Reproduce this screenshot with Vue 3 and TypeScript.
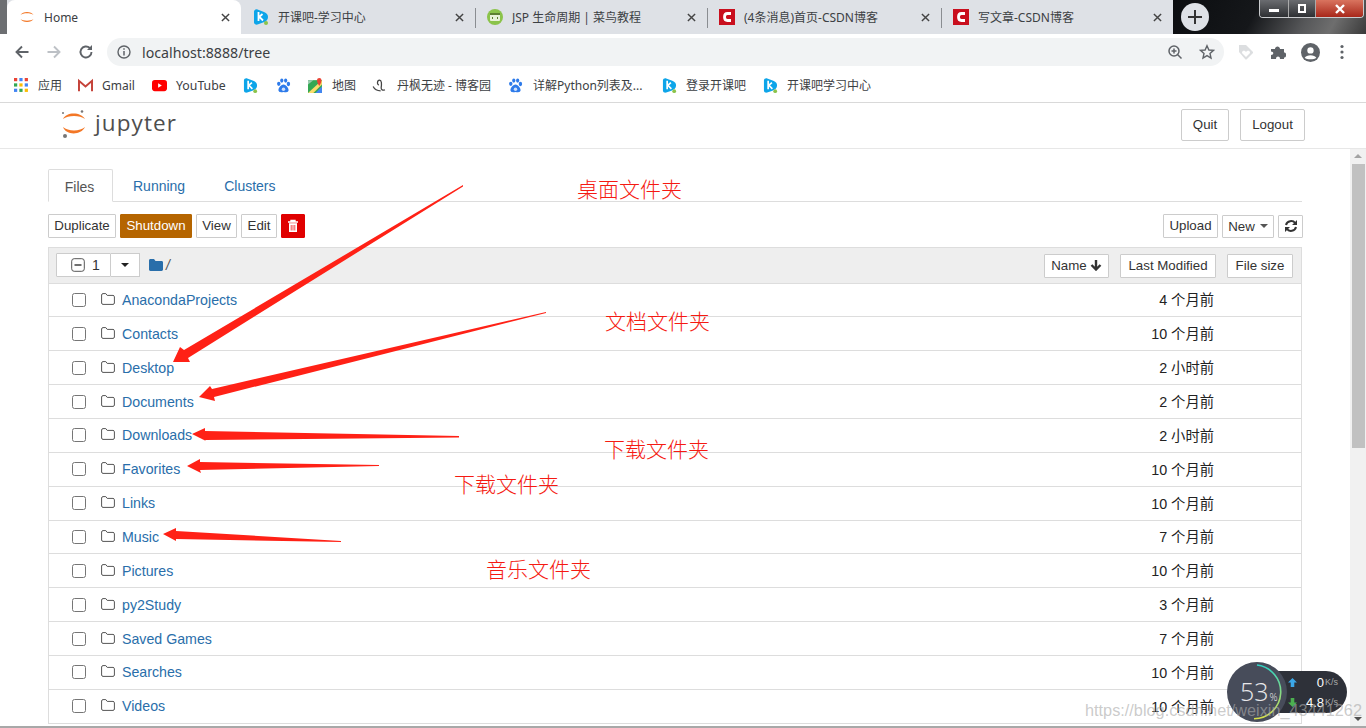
<script setup lang="ts">
type Tab = { title: string; icon: string };
const tabs: Tab[] = [
  { title: "Home", icon: "jup" },
  { title: "开课吧-学习中心", icon: "k" },
  { title: "JSP 生命周期 | 菜鸟教程", icon: "run" },
  { title: "(4条消息)首页-CSDN博客", icon: "c" },
  { title: "写文章-CSDN博客", icon: "c" },
];
const rows: [string, string][] = [
  ["AnacondaProjects", "4 个月前"],
  ["Contacts", "10 个月前"],
  ["Desktop", "2 小时前"],
  ["Documents", "2 个月前"],
  ["Downloads", "2 小时前"],
  ["Favorites", "10 个月前"],
  ["Links", "10 个月前"],
  ["Music", "7 个月前"],
  ["Pictures", "10 个月前"],
  ["py2Study", "3 个月前"],
  ["Saved Games", "7 个月前"],
  ["Searches", "10 个月前"],
  ["Videos", "10 个月前"],
];
const arrows: string[] = [
  "463,185 463,186.5 188,358 190,362 173,362 180,347 184,350",
  "546,312 546,313 214,397 215,401 199,397 210,386 212,389",
  "459,436 459,437.5 205,440 206,441 192,434 205,428 205,431",
  "379,465 379,466 200,470 201,473 187,466 200,459 200,462",
  "341,541 341,542 176,539 176,541 163,534 176,528 176,531",
];
const notes = [
  { text: "桌面文件夹", x: 577, y: 175 },
  { text: "文档文件夹", x: 605, y: 307 },
  { text: "下载文件夹", x: 604, y: 435 },
  { text: "下载文件夹", x: 454, y: 470 },
  { text: "音乐文件夹", x: 486, y: 555 },
];
</script>

<template>
  <div class="page">
    <div class="strip">
      <div class="edge"></div>
      <div v-for="(t, i) in tabs" :key="i" class="tab" :class="{ active: i === 0, divided: i > 1 }">
        <svg v-if="t.icon === 'jup'" class="fav" viewBox="0 0 16 16">
          <path d="M1.5 6C3.5 2 12.5 2 14.5 6C12 3.8 4 3.8 1.5 6Z" fill="#f37726" />
          <path d="M1.5 10C3.5 14 12.5 14 14.5 10C12 12.2 4 12.2 1.5 10Z" fill="#f37726" />
        </svg>
        <svg v-else-if="t.icon === 'k'" class="fav" viewBox="0 0 16 16">
          <path d="M1 2.5C1 .8 3 0 4.5 .5L11 3C14 4.2 15 6 15 8C15 11 13 12.5 10 13.5L4.5 15.5C3 16 1 15 1 13.5Z" fill="#0ea5e9" />
          <path d="M5.5 3V12M5.5 8.5L9.5 5M6.5 8L10 11.5" stroke="#fff" stroke-width="1.8" fill="none" />
          <circle cx="13" cy="14" r="2" fill="#8bc34a" />
        </svg>
        <svg v-else-if="t.icon === 'run'" class="fav" viewBox="0 0 16 16">
          <circle cx="8" cy="8" r="8" fill="#8bc34a" />
          <rect x="3" y="4" width="10" height="8" rx="1" fill="#e8f1d8" />
          <rect x="3" y="4" width="10" height="2" fill="#5d7f32" />
          <path d="M6 8L5 9L6 10M10 8L11 9L10 10" stroke="#5d7f32" fill="none" />
        </svg>
        <svg v-else class="fav" viewBox="0 0 16 16">
          <rect width="16" height="16" fill="#c90f1e" />
          <path d="M12 4.5H8.5C4.5 4.5 4.5 11.5 8.5 11.5H12" stroke="#fff" stroke-width="2.8" fill="none" />
        </svg>
        <span class="tab-title">{{ t.title }}</span>
        <svg class="close" viewBox="0 0 10 10"><path d="M1 1L9 9M9 1L1 9" stroke="#444" stroke-width="1.6" /></svg>
      </div>
      <div class="glass">
        <div class="plus">
          <svg viewBox="0 0 14 14" width="14" height="14"><path d="M7 0V14M0 7H14" stroke="#333" stroke-width="2" /></svg>
        </div>
        <div class="winctl">
          <span class="wbtn w1"><i class="wmin"></i></span>
          <span class="wbtn w2"><i class="wmax"></i></span>
          <span class="wbtn wclose">
            <svg viewBox="0 0 12 10" width="12" height="10"><path d="M2 1L10 9M10 1L2 9" stroke="#fff" stroke-width="2.4" /></svg>
          </span>
        </div>
      </div>
    </div>

    <div class="toolbar">
      <svg class="tool" viewBox="0 0 16 16"><path d="M14.5 8H2.5M8 2.5L2.5 8L8 13.5" stroke="#5f6368" stroke-width="1.9" fill="none" /></svg>
      <svg class="tool" viewBox="0 0 16 16"><path d="M1.5 8H13.5M8 2.5L13.5 8L8 13.5" stroke="#bdc1c6" stroke-width="1.9" fill="none" /></svg>
      <svg class="tool" viewBox="0 0 16 16"><path d="M13.5 8A5.5 5.5 0 1 1 11.8 4" stroke="#5f6368" stroke-width="1.9" fill="none" /><path d="M14 1V6H9Z" fill="#5f6368" /></svg>
      <div class="omni">
        <svg class="info" viewBox="0 0 14 14"><circle cx="7" cy="7" r="6" stroke="#5f6368" stroke-width="1.4" fill="none" /><path d="M7 6V10.5M7 3.2V4.8" stroke="#5f6368" stroke-width="1.5" /></svg>
        <span class="url">localhost:8888/tree</span>
        <span class="spacer"></span>
        <svg class="omni-i" viewBox="0 0 16 16"><circle cx="7" cy="7" r="5" stroke="#5f6368" stroke-width="1.5" fill="none" /><path d="M10.5 10.5L14.5 14.5M7 4.5V9.5M4.5 7H9.5" stroke="#5f6368" stroke-width="1.5" /></svg>
        <svg class="omni-i" viewBox="0 0 16 16"><path d="M8 1.8L9.9 6L14.5 6.4L11 9.4L12 14L8 11.6L4 14L5 9.4L1.5 6.4L6.1 6Z" stroke="#5f6368" stroke-width="1.4" fill="none" /></svg>
      </div>
      <svg class="ext" viewBox="0 0 16 16"><path d="M1 1H8L15 8V9L8.5 15.5H7.5L1 8Z" fill="#dcdee0" /><path d="M4 9L8 13L12 9C12 6 9 6.5 8 8C7 6.5 4 6 4 9Z" fill="#fff" /></svg>
      <svg class="ext" viewBox="0 0 16 16"><path d="M1 5H5C5 1.5 10 1.5 10 5H14V8.5C17 8.5 17 13.5 14 13.5V15H10C10 11.8 6 11.8 6 15H1V11C4 11 4 7.5 1 7.5Z" fill="#5f6368" /></svg>
      <svg class="ext avatar" viewBox="0 0 18 18"><circle cx="9" cy="9" r="9" fill="#5f6368" /><circle cx="9" cy="7" r="3" fill="#fff" /><path d="M3.5 14C5 10.8 13 10.8 14.5 14C12.5 16 5.5 16 3.5 14Z" fill="#fff" /></svg>
      <svg class="ext dots" viewBox="0 0 4 16"><circle cx="2" cy="2.5" r="1.6" fill="#5f6368" /><circle cx="2" cy="8" r="1.6" fill="#5f6368" /><circle cx="2" cy="13.5" r="1.6" fill="#5f6368" /></svg>
    </div>

    <div class="bookmarks">
      <span class="bm bm-apps">
        <svg class="bi" viewBox="0 0 14 14">
          <rect x="0" y="0" width="3" height="3" fill="#ea4335" /><rect x="5" y="0" width="3" height="3" fill="#4285f4" /><rect x="10" y="0" width="3" height="3" fill="#ea4335" />
          <rect x="0" y="5" width="3" height="3" fill="#34a853" /><rect x="5" y="5" width="3" height="3" fill="#fbbc05" /><rect x="10" y="5" width="3" height="3" fill="#4285f4" />
          <rect x="0" y="10" width="3" height="3" fill="#4285f4" /><rect x="5" y="10" width="3" height="3" fill="#34a853" /><rect x="10" y="10" width="3" height="3" fill="#fbbc05" />
        </svg>应用
      </span>
      <span class="bm bm-gmail">
        <svg class="bi" viewBox="0 0 16 14"><path d="M1 13V2L8 8L15 2V13" stroke="#c5433a" stroke-width="2.2" fill="none" /></svg>Gmail
      </span>
      <span class="bm bm-yt">
        <svg class="bi" viewBox="0 0 16 14"><rect y="1" width="16" height="12" rx="3" fill="#f00" /><path d="M6.5 4.5V9.5L10.5 7Z" fill="#fff" /></svg><span class="yt">YouTube</span>
      </span>
      <span class="bm bm-k">
        <svg class="bi" viewBox="0 0 16 16"><path d="M1 2.5C1 .8 3 0 4.5 .5L11 3C14 4.2 15 6 15 8C15 11 13 12.5 10 13.5L4.5 15.5C3 16 1 15 1 13.5Z" fill="#0ea5e9" /><path d="M5.5 3V12M5.5 8.5L9.5 5M6.5 8L10 11.5" stroke="#fff" stroke-width="1.8" fill="none" /><circle cx="13" cy="14" r="2" fill="#8bc34a" /></svg>
      </span>
      <span class="bm bm-paw">
        <svg class="bi" viewBox="0 0 14 14"><g fill="#2e7bea"><ellipse cx="2.6" cy="5.4" rx="1.6" ry="2" /><ellipse cx="5.4" cy="2.4" rx="1.5" ry="2" /><ellipse cx="9" cy="2.4" rx="1.5" ry="2" /><ellipse cx="11.6" cy="5.6" rx="1.6" ry="2" /><path d="M7 6C4.5 6 1.5 10 2.5 12.2C3.5 14 6 13 7 13C8.5 13 10.5 14 11.6 12.2C12.5 10 9.5 6 7 6Z" /></g><circle cx="7" cy="10.5" r="1.6" fill="#cfe0fb" /></svg>
      </span>
      <span class="bm bm-map">
        <svg class="bi" viewBox="0 0 14 14"><rect y="2" width="13" height="12" fill="#34a853" /><path d="M0 14L13 2V6L5 14Z" fill="#fbdc6a" /><path d="M7 14L13 8V14Z" fill="#4285f4" /><path d="M0 2H5L0 6Z" fill="#9ccbb0" /><path d="M10.5 0C8 0 7.5 3 10.5 7.5C13.5 3 13 0 10.5 0Z" fill="#ea4335" /></svg>地图
      </span>
      <span class="bm bm-blog">
        <svg class="bi" viewBox="0 0 14 14"><path d="M7.5 6.5C5.5 6.5 5.5 2 8 2C10 2 10 5.5 9.5 9C9.3 11 11 12 13 11M2 8C3 10 5 12 9 12" stroke="#444" stroke-width="1.2" fill="none" /></svg>丹枫无迹 - 博客园
      </span>
      <span class="bm bm-py">
        <svg class="bi" viewBox="0 0 14 14"><g fill="#2e7bea"><ellipse cx="2.6" cy="5.4" rx="1.6" ry="2" /><ellipse cx="5.4" cy="2.4" rx="1.5" ry="2" /><ellipse cx="9" cy="2.4" rx="1.5" ry="2" /><ellipse cx="11.6" cy="5.6" rx="1.6" ry="2" /><path d="M7 6C4.5 6 1.5 10 2.5 12.2C3.5 14 6 13 7 13C8.5 13 10.5 14 11.6 12.2C12.5 10 9.5 6 7 6Z" /></g><circle cx="7" cy="10.5" r="1.6" fill="#cfe0fb" /></svg>详解Python列表及...
      </span>
      <span class="bm bm-login">
        <svg class="bi" viewBox="0 0 16 16"><path d="M1 2.5C1 .8 3 0 4.5 .5L11 3C14 4.2 15 6 15 8C15 11 13 12.5 10 13.5L4.5 15.5C3 16 1 15 1 13.5Z" fill="#0ea5e9" /><path d="M5.5 3V12M5.5 8.5L9.5 5M6.5 8L10 11.5" stroke="#fff" stroke-width="1.8" fill="none" /><circle cx="13" cy="14" r="2" fill="#8bc34a" /></svg>登录开课吧
      </span>
      <span class="bm bm-learn">
        <svg class="bi" viewBox="0 0 16 16"><path d="M1 2.5C1 .8 3 0 4.5 .5L11 3C14 4.2 15 6 15 8C15 11 13 12.5 10 13.5L4.5 15.5C3 16 1 15 1 13.5Z" fill="#0ea5e9" /><path d="M5.5 3V12M5.5 8.5L9.5 5M6.5 8L10 11.5" stroke="#fff" stroke-width="1.8" fill="none" /><circle cx="13" cy="14" r="2" fill="#8bc34a" /></svg>开课吧学习中心
      </span>
    </div>

    <header class="jhead">
      <svg class="jlogo" viewBox="0 0 26 30">
        <path d="M2 10C5 2.5 20 2.5 24 10C19 6 7 6 2 10Z" fill="#f37726" />
        <path d="M2 18C5 26.5 20 26.5 24 18C19 22.5 7 22.5 2 18Z" fill="#f37726" />
        <circle cx="21" cy="2.5" r="1.3" fill="#767677" />
        <circle cx="2" cy="4" r="1" fill="#767677" />
        <circle cx="4" cy="27" r="2" fill="#767677" />
      </svg>
      <span class="jword">jupyter</span>
      <span class="spacer"></span>
      <button class="btn quit">Quit</button>
      <button class="btn logout">Logout</button>
    </header>

    <div class="mainwrap">
      <main class="content">
        <nav class="tabs">
          <span class="ntab on">Files</span>
          <span class="ntab running">Running</span>
          <span class="ntab clusters">Clusters</span>
        </nav>
        <div class="actions">
          <button class="sbtn w-dup">Duplicate</button>
          <button class="sbtn w-shut">Shutdown</button>
          <button class="sbtn w-view">View</button>
          <button class="sbtn w-edit">Edit</button>
          <button class="sbtn w-trash">
            <svg viewBox="0 0 12 14" width="12" height="14"><path d="M1 3H11M4 3V1.5H8V3" stroke="#fff" stroke-width="1.4" fill="none" /><path d="M2 4.2H10V13H2Z" fill="#fff" /><path d="M4.2 6V11.5M6 6V11.5M7.8 6V11.5" stroke="#e00" stroke-width=".7" /></svg>
          </button>
          <span class="spacer"></span>
          <button class="sbtn w-up">Upload</button>
          <button class="sbtn w-new">New <i class="caret"></i></button>
          <button class="sbtn w-ref">
            <svg viewBox="0 0 14 14" width="14" height="14"><path d="M2 6C3 1.5 9 1 11 4M12 8C11 12.5 5 13 3 10" stroke="#333" stroke-width="2" fill="none" /><path d="M13 1V6H8ZM1 13V8H6Z" fill="#333" /></svg>
          </button>
        </div>
        <section class="list">
          <div class="lhead">
            <div class="selbox">
              <svg viewBox="0 0 14 14" width="14" height="14"><rect x=".7" y=".7" width="12.6" height="12.6" rx="2.5" stroke="#555" fill="#fff" /><path d="M3.5 7H10.5" stroke="#333" stroke-width="1.4" /></svg>
              <span>1</span>
            </div>
            <div class="seldrop"><i class="caret dark"></i></div>
            <svg class="bluefolder" viewBox="0 0 14 12"><path d="M0 1.5C0 .7 .6 0 1.4 0H5L6.5 2H12.6C13.4 2 14 2.6 14 3.4V10.6C14 11.4 13.4 12 12.6 12H1.4C.6 12 0 11.4 0 10.6Z" fill="#296eaa" /></svg>
            <span class="crumb">/</span>
            <span class="spacer"></span>
            <button class="sbtn h-name">Name
              <svg viewBox="0 0 12 12" width="12" height="12"><path d="M6 1V10M1.5 6L6 10.5L10.5 6" stroke="#333" stroke-width="2.4" fill="none" /></svg>
            </button>
            <button class="sbtn h-mod">Last Modified</button>
            <button class="sbtn h-size">File size</button>
          </div>
          <div v-for="r in rows" :key="r[0]" class="row">
            <span class="check"></span>
            <svg class="rfolder" viewBox="0 0 14 12"><path d="M.6 2C.6 1.2 1.2.6 2 .6H4.8L6.2 2.4H12C12.8 2.4 13.4 3 13.4 3.8V10C13.4 10.8 12.8 11.4 12 11.4H2C1.2 11.4 .6 10.8 .6 10Z" stroke="#555" stroke-width="1" fill="none" /></svg>
            <a class="rname">{{ r[0] }}</a>
            <span class="spacer"></span>
            <span class="rtime">{{ r[1] }}</span>
          </div>
        </section>
      </main>
      <aside class="scroll">
        <i class="up"></i>
        <div class="thumb"></div>
        <span class="spacer"></span>
        <i class="down"></i>
      </aside>
    </div>

    <svg class="overlay" width="1366" height="728" viewBox="0 0 1366 728">
      <polygon v-for="(p, i) in arrows" :key="i" :points="p" fill="#ff2116" />
    </svg>
    <span v-for="(n, i) in notes" :key="'n' + i" class="note" :style="{ left: n.x + 'px', top: n.y + 'px' }">{{ n.text }}</span>

    <div class="widget">
      <div class="pill">
        <div class="speed"><svg viewBox="0 0 10 10" width="9" height="9"><path d="M5 0L10 5H7V10H3V5H0Z" fill="#3ba7e8" /></svg><b>0</b><small>K/s</small></div>
        <div class="speed"><svg viewBox="0 0 10 10" width="9" height="9"><path d="M5 10L10 5H7V0H3V5H0Z" fill="#4caf50" /></svg><b>4.8</b><small>K/s</small></div>
      </div>
      <div class="dial">
        <svg class="ring" viewBox="0 0 60 60" width="60" height="60">
          <circle cx="30" cy="30" r="30" fill="#474c5a" />
          <defs><linearGradient id="rg" x1="0" y1="0" x2="0" y2="1"><stop offset="0" stop-color="#2fd3c4" /><stop offset="1" stop-color="#d8e04a" /></linearGradient></defs>
          <path d="M30 3A27 27 0 0 1 27 56.8" stroke="url(#rg)" stroke-width="1.6" fill="none" />
        </svg>
        <span class="pct">53<small>%</small></span>
      </div>
    </div>
    <span class="mark">https://blog.csdn.net/weixin_43441262</span>
  </div>
</template>

<style>
html, body { margin: 0; overflow: hidden; background: #fff; }
</style>

<style scoped>
.page {
  position: relative; width: 1366px; height: 728px; overflow: hidden;
  display: flex; flex-direction: column; background: #fff;
  font-family: "Liberation Sans", "Noto Sans CJK SC", sans-serif; color: #333;
}
.spacer { flex: 1; }

.strip { height: 34px; display: flex; background: #dee1e6; flex: none; }
.edge { width: 7px; background: #6d6f72; }
.tab {
  width: 234px; flex: none; display: flex; align-items: center; box-sizing: border-box;
  padding: 0 11px 0 12px; position: relative;
  font-family: "Noto Sans", "Noto Sans CJK SC", sans-serif; font-size: 12px; color: #3c4043;
}
.tab:nth-child(4) { width: 232px; }
.tab:nth-child(6) { width: 232px; border-radius: 0 8px 0 0; }
.tab.active { background: #fff; border-radius: 8px 8px 0 0; }
.tab.divided::before { content: ""; position: absolute; left: 0; top: 8px; height: 20px; width: 1px; background: #8a8d91; }
.fav { width: 16px; height: 16px; flex: none; margin-right: 9px; }
.tab-title { flex: 1; white-space: nowrap; overflow: hidden; }
.close { width: 9px; height: 9px; flex: none; }
.glass {
  flex: 1; display: flex; align-items: flex-start; position: relative;
  background: linear-gradient(118deg, #0b0d10 0%, #15171a 42%, #565759 68%, #6e6e6e 82%, #3a3a3a 100%);
}
.plus {
  width: 28px; height: 28px; border-radius: 50%; background: #dee1e6; margin: 3px 0 0 8px;
  display: flex; align-items: center; justify-content: center;
}
.winctl {
  position: absolute; right: 2px; top: 0; width: 105px; height: 18px; display: flex;
  border: 1px solid #c9cbce; border-top: 0; border-radius: 0 0 4px 4px; box-sizing: border-box; overflow: hidden;
}
.wbtn { display: flex; align-items: center; justify-content: center; border-right: 1px solid #aaa;
  background: linear-gradient(#6a6c70, #2e3033); box-sizing: border-box; }
.w1 { width: 29px; }
.w2 { width: 27px; }
.wclose { flex: 1; background: linear-gradient(#d9745f, #a8271a); border-right: 0; }
.wmin { width: 10px; height: 3px; background: #fff; margin-top: 4px; }
.wmax { width: 8px; height: 9px; border: 2px solid #fff; box-sizing: border-box; }

.toolbar { height: 34px; display: flex; align-items: center; flex: none; background: #fff; padding: 2px 0 0 14px; box-sizing: border-box; }
.tool { width: 16px; height: 16px; flex: none; margin-right: 16px; }
.omni {
  width: 1117px; height: 28px; margin-left: -3px; border-radius: 14px; background: #f1f3f4; flex: none;
  display: flex; align-items: center; box-sizing: border-box; padding: 0 9px 0 10px;
}
.info { width: 14px; height: 14px; margin-right: 11px; }
.url { font-family: "Noto Sans", sans-serif; font-size: 14.2px; color: #3c4043; }
.omni-i { width: 16px; height: 16px; margin-left: 16px; }
.ext { width: 16px; height: 16px; flex: none; margin-left: 16px; }
.toolbar .omni + .ext { margin-left: 14px; }
.avatar { width: 19px; height: 19px; margin-left: 15px; }
.dots { width: 4px; margin-left: 20px; }

.bookmarks {
  height: 35px; display: flex; align-items: center; flex: none; box-sizing: border-box;
  border-bottom: 1px solid #d9d9d9; font-family: "Noto Sans", "Noto Sans CJK SC", sans-serif; font-size: 12px; color: #3c4043;
}
.bm { display: inline-flex; align-items: center; white-space: nowrap; flex: none; }
.bi { width: 15px; height: 15px; flex: none; margin-right: 9px; }
.yt { font-size: 12.3px; }
.bm-apps { margin-left: 14px; width: 64px; }
.bm-gmail { width: 74px; }
.bm-yt { width: 91px; }
.bm-k { width: 33px; }
.bm-paw { width: 32px; }
.bm-map { width: 63px; }
.bm-blog { width: 137px; }
.bm-blog .bi { margin-right: 11px; }
.bm-py { width: 154px; }
.bm-py .bi { margin-right: 10px; }
.bm-login { width: 101px; }

.jhead { height: 46px; box-sizing: border-box; border-bottom: 1px solid #e7e7e7; display: flex; align-items: flex-start; flex: none; }
.jlogo { width: 26px; height: 30px; margin: 6px 0 0 61px; flex: none; }
.jword {
  margin: 1px 0 0 8px; font-family: "Open Sans", sans-serif; font-size: 22.5px; line-height: 38px;
  letter-spacing: 1.1px; color: #4e4e4e;
}
.btn {
  height: 32px; box-sizing: border-box; border: 1px solid #ccc; border-radius: 2px; background: #fff;
  font: 13.3px "Liberation Sans", sans-serif; color: #333; padding: 0 0 2px; margin-top: 6px;
}
.quit { width: 48px; }
.logout { width: 65px; margin-left: 11px; margin-right: 61px; }

.mainwrap { flex: 1; display: flex; min-height: 0; border-bottom: 2px solid #a8a8a8; }
.content { flex: 1; min-width: 0; overflow: hidden; padding: 20px 48px 0 48px; box-sizing: border-box; }
.tabs { height: 33px; display: flex; box-sizing: border-box; border-bottom: 1px solid #ddd; font-size: 14px; }
.ntab { height: 33px; line-height: 35px; color: #296eaa; box-sizing: border-box; }
.ntab.on { width: 65px; padding-right: 2px; text-align: center; border: 1px solid #ddd; border-bottom-color: #fff; border-radius: 2px 2px 0 0; color: #555; background: #fff; }
.running { margin-left: 20px; }
.clusters { margin-left: 39px; }
.actions { display: flex; height: 24px; margin-top: 12px; margin-right: -1px; align-items: flex-end; }
.sbtn {
  height: 24px; box-sizing: border-box; border: 1px solid #ccc; border-radius: 1px; background: #fff; padding: 0 0 1px;
  font: 13.3px "Liberation Sans", sans-serif; color: #333; margin-right: 4px; flex: none;
  display: inline-flex; align-items: center; justify-content: center; gap: 3px;
}
.w-dup { width: 68px; }
.w-shut { width: 72px; background: #b56500; border-color: #b56500; color: #fff; }
.w-view { width: 41px; }
.w-edit { width: 36px; }
.w-trash { width: 24px; background: #e00000; border-color: #e00000; }
.w-up { width: 55px; }
.w-new { width: 52px; height: 23px; gap: 5px; }
.w-ref { width: 25px; height: 23px; margin-right: 0; }
.caret { display: inline-block; width: 0; height: 0; border: 4px solid transparent; border-top-color: #555; border-bottom: 0; }
.caret.dark { border-top-color: #222; }
.list { margin-top: 9px; border: 1px solid #ddd; border-bottom: 0; border-right-color: #ddd; width: 1254px; box-sizing: border-box; }
.lhead {
  height: 35.5px; display: flex; align-items: center; background: #eee; box-sizing: border-box;
  border-bottom: 1px solid #ddd; padding: 0 8px 0 7px; font-size: 14px;
}
.selbox {
  width: 55px; height: 24px; background: #fff; border: 1px solid #ccc; box-sizing: border-box;
  display: flex; align-items: center; gap: 7px; padding-left: 14px; border-radius: 1px;
}
.seldrop {
  width: 29px; height: 24px; background: #fff; border: 1px solid #ccc; border-left: 0; box-sizing: border-box;
  display: flex; align-items: center; justify-content: center;
}
.bluefolder { width: 14px; height: 12px; margin-left: 9px; }
.crumb { margin-left: 3px; color: #555; font-style: italic; }
.h-name { width: 65px; margin-right: 11px; margin-top: 1px; }
.h-mod { width: 96px; margin-right: 11px; margin-top: 1px; }
.h-size { width: 66px; margin-right: 0; margin-top: 1px; }
.row {
  height: 33.86px; box-sizing: border-box; border-bottom: 1px solid #ddd; display: flex; align-items: center;
  font-size: 14.2px; padding-left: 23px;
}
.check { width: 14px; height: 14px; box-sizing: border-box; border: 1px solid #767676; border-radius: 2.5px; background: #fff; flex: none; }
.rfolder { width: 14px; height: 12px; margin-left: 15px; flex: none; margin-top: -2px; }
.rname { margin-left: 7px; color: #296eaa; }
.rtime { color: #222; margin-right: 87px; margin-top: -2px; font-family: "Liberation Sans", "Noto Sans CJK SC", sans-serif; font-size: 14.3px; }

.scroll { width: 16px; background: #f1f1f1; display: flex; flex-direction: column; align-items: center; flex: none; }
.scroll .up, .scroll .down { width: 0; height: 0; border-left: 4px solid transparent; border-right: 4px solid transparent; margin: 5px 0; }
.scroll .up { border-bottom: 4px solid #a3a3a3; }
.scroll .down { border-top: 4px solid #505050; }
.thumb { width: 13px; height: 284px; background: #c1c1c1; margin-top: 1px; }

.overlay { position: absolute; left: 0; top: 0; pointer-events: none; }
.note { position: absolute; font: 21px/26px "Noto Sans CJK SC", sans-serif; font-weight: 300; color: #f51a12; white-space: nowrap; }

.widget { position: absolute; left: 1227px; top: 662px; width: 122px; height: 60px; }
.pill {
  position: absolute; left: 25px; top: 9px; width: 95px; height: 42px; border-radius: 21px;
  background: #2e3139; box-sizing: border-box; padding: 1px 9px 0 36px;
}
.speed { display: flex; align-items: center; height: 20px; color: #fff; font-size: 13px; }
.speed b { margin-left: auto; font-weight: 400; }
.speed small { font-size: 9px; color: #aaa; margin-left: 1px; }
.dial { position: absolute; left: 0; top: 0; width: 60px; height: 60px; }
.ring { position: absolute; left: 0; top: 0; }
.pct { position: absolute; left: 13px; top: 15px; color: #e8e8ea; font: 25px/28px "Open Sans", sans-serif; font-weight: 300; white-space: nowrap; }
.pct small { font-size: 10px; margin-left: 1px; }
.mark { position: absolute; left: 1085px; top: 701px; font: 16.3px/19px "Liberation Sans", sans-serif; color: rgba(170, 170, 170, .62); white-space: nowrap; }
</style>
